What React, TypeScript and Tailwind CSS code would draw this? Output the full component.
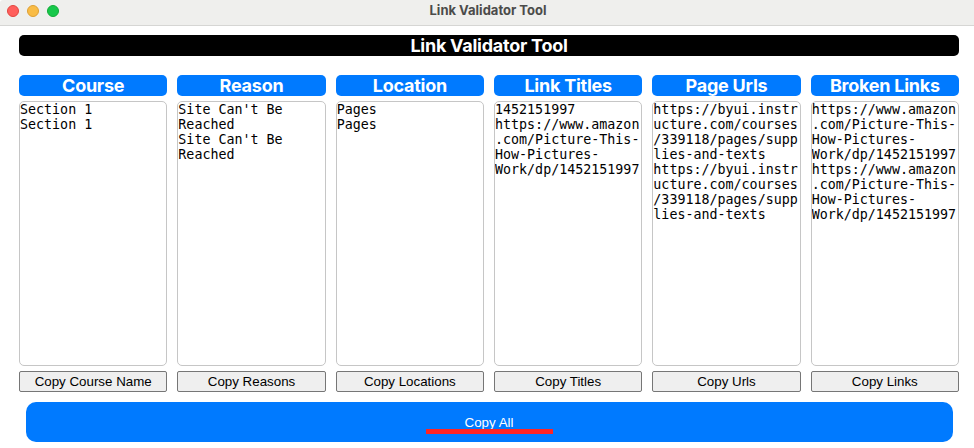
const columns = [
  { title: 'Course', button: 'Copy Course Name', lines: ['Section 1', 'Section 1'] },
  { title: 'Reason', button: 'Copy Reasons', lines: ["Site Can't Be", 'Reached', "Site Can't Be", 'Reached'] },
  { title: 'Location', button: 'Copy Locations', lines: ['Pages', 'Pages'] },
  {
    title: 'Link Titles',
    button: 'Copy Titles',
    lines: ['1452151997', 'https://www.amazon', '.com/Picture-This-', 'How-Pictures-', 'Work/dp/1452151997'],
  },
  {
    title: 'Page Urls',
    button: 'Copy Urls',
    lines: [
      'https://byui.instr', 'ucture.com/courses', '/339118/pages/supp', 'lies-and-texts',
      'https://byui.instr', 'ucture.com/courses', '/339118/pages/supp', 'lies-and-texts',
    ],
  },
  {
    title: 'Broken Links',
    button: 'Copy Links',
    lines: [
      'https://www.amazon', '.com/Picture-This-', 'How-Pictures-', 'Work/dp/1452151997',
      'https://www.amazon', '.com/Picture-This-', 'How-Pictures-', 'Work/dp/1452151997',
    ],
  },
];

function TitleBar() {
  return (
    <header className="relative flex h-[26px] items-start justify-center rounded-tl-[3px] border-b border-[#d6d6d4] bg-[#efefed]">
      <div className="absolute top-[5px] left-[7px] flex gap-2">
        <span className="size-3 rounded-full border border-[#e2463f] bg-[#ff5f5c]" />
        <span className="size-3 rounded-full border border-[#dfa033] bg-[#f9bc45]" />
        <span className="size-3 rounded-full border border-[#12ac37] bg-[#17c84b]" />
      </div>
      <span className="pt-[2px] pl-[2px] font-['Inter',sans-serif] text-[13px] leading-[17px] font-bold text-[#4b4b4a]">
        Link Validator Tool
      </span>
    </header>
  );
}

export default function App() {
  return (
    <div className="h-[448px] w-[974px] overflow-hidden bg-white">
      <TitleBar />
      <main className="flex flex-col pt-[9px] pr-[15px] pl-[19px]">
        <h1 className="h-[21px] rounded-[5px] bg-black text-center font-['Inter',sans-serif] text-[18px] leading-[21px] font-bold tracking-[-0.25px] text-white">
          Link Validator Tool
        </h1>
        <div className="mt-[19px] grid grid-cols-6 gap-[10px]">
          {columns.map((column) => (
            <section key={column.title} className="flex flex-col gap-[5px]">
              <h2 className="h-[21px] rounded-[5px] bg-[#007aff] text-center font-['Inter',sans-serif] text-[18px] leading-[21px] font-bold tracking-[-0.25px] text-white">
                {column.title}
              </h2>
              <div className="h-[265px] overflow-hidden rounded-[5px] border border-[#c6c6c6] font-['DejaVu_Sans_Mono',monospace] text-[13.333px] leading-[15px] whitespace-pre text-black">
                {column.lines.map((line, i) => (
                  <div key={i}>{line}</div>
                ))}
              </div>
              <button className="h-[21px] rounded-[2px] border border-[#767676] bg-[#efefef] font-['Liberation_Sans',Arial,sans-serif] text-[13.333px] leading-[19px] text-black">
                {column.button}
              </button>
            </section>
          ))}
        </div>
        <button className="relative mt-[10px] mr-[6px] ml-[7px] h-10 rounded-[10px] bg-[#007aff] pr-px font-['Liberation_Sans',Arial,sans-serif] text-[13.333px] leading-[15px] text-white">
          Copy All
          <span className="absolute top-[27px] left-[400px] h-[5px] w-[127px] bg-[#ff2424]" />
        </button>
      </main>
    </div>
  );
}
